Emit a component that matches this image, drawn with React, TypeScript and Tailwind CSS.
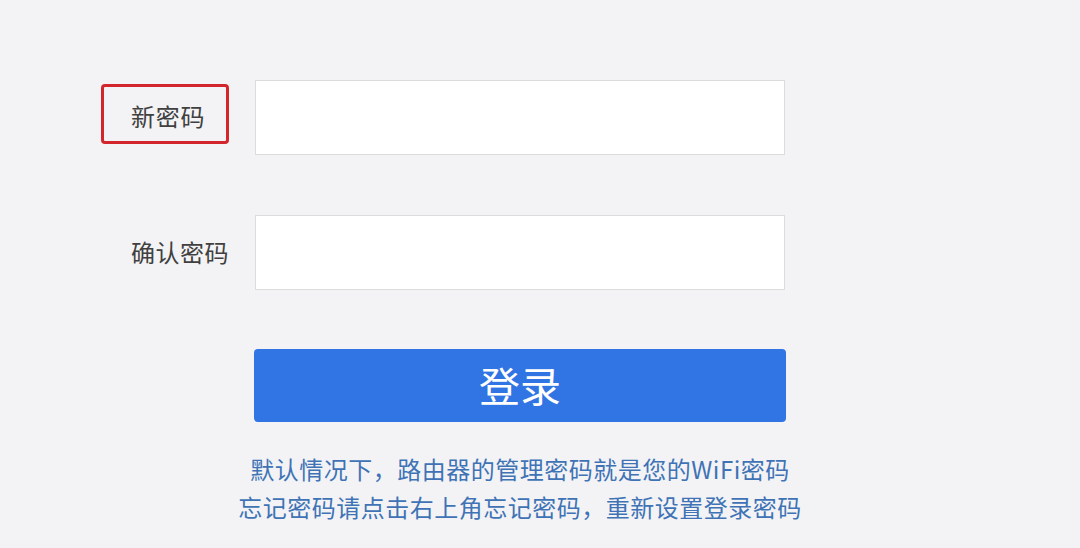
import React from "react";

export default function App() {
  const font = { fontFamily: '"Noto Sans CJK SC", "Noto Sans", sans-serif' };
  return (
    <div className="w-[1080px] h-[548px] bg-[#f3f3f5] overflow-hidden" style={font}>
      <div className="pt-[80px] pl-[101px] flex flex-col">
        <div className="flex items-center h-[75px]">
          <div className="relative w-[154px] h-full flex items-center">
            <div className="absolute left-0 top-[4px] w-[128px] h-[60px] border-[3px] border-[#d3262c] rounded-[4px]" />
            <span className="pl-[30px] text-[24px] tracking-[0.7px] text-[#404040] -mt-[3px]">新密码</span>
          </div>
          <div className="w-[530px] h-[75px] bg-white border border-[#dcdcdc]" />
        </div>
        <div className="flex items-center h-[75px] mt-[60px]">
          <div className="w-[154px] h-full flex items-center">
            <span className="pl-[30px] text-[24px] tracking-[0.5px] text-[#404040] -mt-[2px]">确认密码</span>
          </div>
          <div className="w-[530px] h-[75px] bg-white border border-[#dcdcdc]" />
        </div>
        <div className="ml-[153px] mt-[59px] w-[532px] h-[73px] bg-[#3174e3] rounded-[4px] flex items-center justify-center">
          <span className="text-white text-[41px] leading-none -mt-[2px]">登录</span>
        </div>
        <div className="ml-[153px] w-[532px] mt-[28px] flex flex-col items-center text-[24px] tracking-[0.5px] leading-[38px] text-[#3f73b5] whitespace-nowrap">
          <div>默认情况下，路由器的管理密码就是您的WiFi密码</div>
          <div>忘记密码请点击右上角忘记密码，重新设置登录密码</div>
        </div>
      </div>
    </div>
  );
}
